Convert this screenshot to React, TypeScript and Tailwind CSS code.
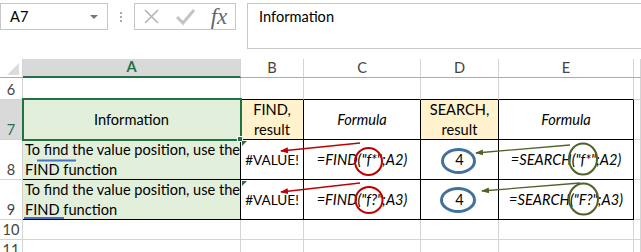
import React from 'react'

const font = { fontFamily: 'Lato, "Liberation Sans", sans-serif' }

type Cell = {
  text?: React.ReactNode
  cls?: string
}

function RowHead({ n, active }: { n: string; active?: boolean }) {
  return (
    <div
      className={`flex items-end justify-center border-r border-b border-[#d4d4d4] pb-[1px] text-[14.6px] leading-none ${
        active ? 'bg-[#d9d9d9] text-[#217346]' : 'bg-white text-[#444]'
      }`}
    >
      {n}
    </div>
  )
}

function ColHead({ l, active }: { l: string; active?: boolean }) {
  return (
    <div
      className={`flex items-center justify-center text-[14.6px] leading-none ${
        active
          ? 'bg-[#d9d9d9] text-[#217346] font-bold border-r border-[#d4d4d4] border-b-2 border-b-[#217346]'
          : 'bg-white text-[#444] border-r border-b border-[#d4d4d4] border-b-[#ababab]'
      }`}
    >
      {l}
    </div>
  )
}

function C({ text, cls = '' }: Cell) {
  return <div className={`flex items-center justify-center text-[14.6px] leading-[20px] ${cls}`}>{text}</div>
}

const grid = 'border-r border-b border-[#d4d4d4]'
const blk = 'border-r border-b border-black'

export default function App() {
  return (
    <div className="relative w-[641px] h-[252px] overflow-hidden bg-white text-black" style={font}>
      {/* formula bar */}
      <div className="flex h-[59px] items-start pt-[3px]">
        <div className="flex h-[27px] w-[108px] items-center justify-between border border-[#c6c6c6] pl-[9px] pr-[9px] text-[14.6px]">
          <span>A7</span>
          <span className="h-0 w-0 border-x-[4px] border-t-[4px] border-x-transparent border-t-[#777]" />
        </div>
        <div className="flex h-[27px] w-[26px] flex-col items-center justify-center gap-[2px]">
          <span className="h-[2px] w-[2px] bg-[#aaa]" />
          <span className="h-[2px] w-[2px] bg-[#aaa]" />
          <span className="h-[2px] w-[2px] bg-[#aaa]" />
        </div>
        <div className="flex h-[27px] w-[102px] items-center border border-[#c6c6c6]">
          <svg width="34" height="25" viewBox="0 0 34 25">
            <path d="M10 6 L23 19 M23 6 L10 19" stroke="#b4b4b4" strokeWidth="1.6" />
          </svg>
          <svg width="34" height="25" viewBox="0 0 34 25">
            <path d="M8 13 L14 19 L25 6" stroke="#c4c4c4" strokeWidth="3" fill="none" />
          </svg>
          <span
            className="flex-1 text-center text-[23px] leading-none italic text-[#666]"
            style={{ fontFamily: '"Liberation Serif", serif' }}
          >
            fx
          </span>
        </div>
        <div className="ml-[11px] flex h-[46px] flex-1 items-start border-y border-l border-[#c6c6c6] pl-[11px] pt-[2px] text-[14.6px]">
          Information
        </div>
      </div>

      {/* sheet */}
      <div className="grid grid-cols-[23px_218px_63px_117px_78px_135px_1fr] grid-rows-[19px_22px_40px_40px_40px_20px_20px]">
        <div className="relative border-r border-b border-[#d4d4d4] border-b-[#ababab] bg-white">
          <svg className="absolute left-[7px] top-[4px]" width="12" height="12" viewBox="0 0 12 12">
            <path d="M12 0 L12 12 L0 12 Z" fill="#dcdcdc" />
          </svg>
        </div>
        <ColHead l="A" active />
        <ColHead l="B" />
        <ColHead l="C" />
        <ColHead l="D" />
        <ColHead l="E" />
        <ColHead l="" />

        {/* row 6 */}
        <RowHead n="6" />
        <C cls={`${grid} border-b-black`} />
        <C cls={`${grid} border-b-black`} />
        <C cls={`${grid} border-b-black`} />
        <C cls={`${grid} border-b-black`} />
        <C cls={`${grid} border-b-black`} />
        <C cls={grid} />

        {/* row 7 */}
        <RowHead n="7" active />
        <C cls={`${blk} bg-[#e2efda]`} text="Information" />
        <C cls={`${blk} bg-[#fff2cc] text-center`} text={<span>FIND,<br />result</span>} />
        <C cls={blk} text={<i>Formula</i>} />
        <C cls={`${blk} bg-[#fff2cc] text-center`} text={<span>SEARCH,<br />result</span>} />
        <C cls={blk} text={<i>Formula</i>} />
        <C cls={grid} />

        {/* row 8 */}
        <RowHead n="8" />
        <div className={`${blk} bg-[#e2efda] pl-[2px] text-[14.6px] leading-[20px] whitespace-nowrap`}>
          To find the value position, use the
          <br />
          FIND function
        </div>
        <C cls={blk} text={<span className="text-[13.6px]">#VALUE!</span>} />
        <C cls={blk} text={<i>=FIND("f*";A2)</i>} />
        <C cls={blk} text="4" />
        <C cls={blk} text={<i>=SEARCH("f*";A2)</i>} />
        <C cls={grid} />

        {/* row 9 */}
        <RowHead n="9" />
        <div className={`${blk} bg-[#e2efda] pl-[2px] text-[14.6px] leading-[20px] whitespace-nowrap`}>
          To find the value position, use the
          <br />
          FIND function
        </div>
        <C cls={blk} text={<span className="text-[13.6px]">#VALUE!</span>} />
        <C cls={blk} text={<i>=FIND("f?";A3)</i>} />
        <C cls={blk} text="4" />
        <C cls={blk} text={<i>=SEARCH("F?";A3)</i>} />
        <C cls={grid} />

        {/* row 10 */}
        <RowHead n="10" />
        <C cls={grid} />
        <C cls={grid} />
        <C cls={grid} />
        <C cls={grid} />
        <C cls={grid} />
        <C cls={grid} />

        {/* row 11 */}
        <RowHead n="11" />
        <C cls={grid} />
        <C cls={grid} />
        <C cls={grid} />
        <C cls={grid} />
        <C cls={grid} />
        <C cls={grid} />
      </div>

      {/* selection box on A7 */}
      <div className="pointer-events-none absolute left-[22px] top-[98px] h-[43px] w-[220px] border-2 border-[#217346]" />
      <div className="pointer-events-none absolute left-[237px] top-[136px] h-[6px] w-[6px] border border-white bg-[#217346]" />

      {/* annotations */}
      <svg className="pointer-events-none absolute left-0 top-0" width="641" height="252" viewBox="0 0 641 252">
        <defs>
          <marker id="ar" markerWidth="8" markerHeight="6" refX="7" refY="3" orient="auto" markerUnits="userSpaceOnUse">
            <path d="M0 0 L8 3 L0 6 Z" fill="#c00000" />
          </marker>
          <marker id="ag" markerWidth="8" markerHeight="6" refX="7" refY="3" orient="auto" markerUnits="userSpaceOnUse">
            <path d="M0 0 L8 3 L0 6 Z" fill="#4f6228" />
          </marker>
        </defs>
        {/* error indicators */}
        <path d="M242 141 L247 141 L242 146 Z" fill="#217346" />
        <path d="M242 181 L247 181 L242 186 Z" fill="#217346" />

        {/* blue underlines */}
        <line x1="37" y1="160.5" x2="76" y2="160.5" stroke="#4472c4" strokeWidth="2" />
        <line x1="24" y1="218" x2="64" y2="218" stroke="#4472c4" strokeWidth="2" />

        {/* red */}
        <line x1="360" y1="143" x2="281" y2="151" stroke="#c00000" strokeWidth="1.3" markerEnd="url(#ar)" />
        <line x1="360" y1="183" x2="281" y2="192" stroke="#c00000" strokeWidth="1.3" markerEnd="url(#ar)" />
        <ellipse cx="368.5" cy="161.5" rx="13.5" ry="13.5" fill="none" stroke="#c00000" strokeWidth="2" />
        <ellipse cx="369" cy="200" rx="13.5" ry="13" fill="none" stroke="#c00000" strokeWidth="2" />

        {/* blue circles */}
        <ellipse cx="458.5" cy="161" rx="16" ry="11.5" fill="none" stroke="#41719c" strokeWidth="3" />
        <ellipse cx="458" cy="200" rx="16.5" ry="11.5" fill="none" stroke="#41719c" strokeWidth="3" />

        {/* green */}
        <line x1="570" y1="145" x2="476" y2="153" stroke="#4f6228" strokeWidth="1.3" markerEnd="url(#ag)" />
        <line x1="580" y1="183" x2="482" y2="191" stroke="#4f6228" strokeWidth="1.3" markerEnd="url(#ag)" />
        <ellipse cx="583" cy="159" rx="14" ry="15.5" fill="none" stroke="#4f6228" strokeWidth="2" />
        <ellipse cx="583.5" cy="199" rx="14.5" ry="15.5" fill="none" stroke="#4f6228" strokeWidth="2" />
      </svg>
    </div>
  )
}
